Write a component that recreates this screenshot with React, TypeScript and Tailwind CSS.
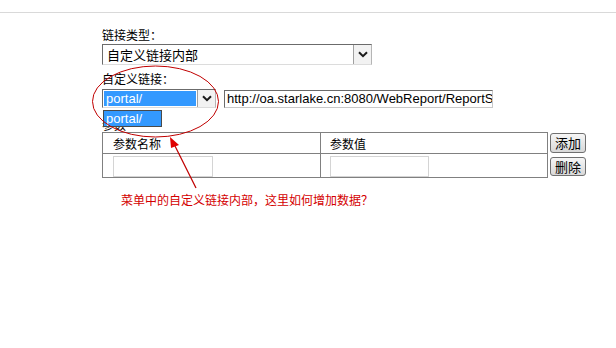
import React from "react";

const cjk = { fontFamily: '"Noto Sans CJK SC", "Noto Sans", sans-serif' };
const latin = { fontFamily: '"Liberation Sans", Arial, "Noto Sans CJK SC", sans-serif' };

function Chevron() {
  return (
    <svg width="10" height="7" viewBox="0 0 10 7">
      <path d="M1 1.2 L5 5.2 L9 1.2" fill="none" stroke="#1a1a1a" strokeWidth="2" />
    </svg>
  );
}

function DropBtn() {
  return (
    <div className="w-[18px] self-stretch flex items-center justify-center bg-[#f2f2f2] border-l border-[#a0a0a0]">
      <Chevron />
    </div>
  );
}

export default function App() {
  return (
    <div className="relative w-[616px] h-[348px] bg-white overflow-hidden text-black" style={cjk}>
      <div className="h-[12px]" />
      <div className="h-px bg-[#d9d9d9]" />

      <div className="pl-[102px] pt-[15px] flex flex-col">
        <div className="text-[12px] leading-[14px] h-[15px]">链接类型：</div>
        <div className="w-[270px] h-[21px] flex border border-t-[#6b6b6b] border-l-[#6b6b6b] border-r-[#b5b5b5] border-b-[#dcdcdc] mt-[1px]">
          <div className="flex-1 pl-[4px] text-[13px] leading-[19px]">自定义链接内部</div>
          <DropBtn />
        </div>

        <div className="text-[12px] leading-[14px] h-[14px] mt-[7px]">自定义链接：</div>
        <div className="flex items-start mt-[3px] h-[20px]">
          <div className="w-[114px] h-[19px] flex border border-t-[#6b6b6b] border-l-[#6b6b6b] border-r-[#b5b5b5] border-b-[#dcdcdc]">
            <div className="flex-1 p-[1px]">
              <div className="h-full bg-[#3399ff] text-white text-[13px] leading-[15px] pl-[2px]" style={latin}>portal/</div>
            </div>
            <DropBtn />
          </div>
          <div
            className="ml-[8px] mt-[1px] w-[269px] h-[18px] border border-t-[#6b6b6b] border-l-[#6b6b6b] border-r-[#c8c8c8] border-b-[#c8c8c8] text-[13px] leading-[16px] pl-[2px] whitespace-nowrap overflow-hidden"
            style={latin}
          >
            http://oa.starlake.cn:8080/WebReport/ReportS
          </div>
        </div>

        <div className="text-[12px] leading-[14px] h-[14px] mt-[9px]">参数</div>

        <div className="flex w-[486px]">
          <div className="flex flex-col w-[446px] border border-[#808080]">
            <div className="flex h-[21px] border-b border-[#808080]">
              <div className="w-[218px] pl-[10px] text-[12px] leading-[21px] border-r border-[#808080]">参数名称</div>
              <div className="flex-1 pl-[9px] text-[12px] leading-[21px]">参数值</div>
            </div>
            <div className="flex h-[23px]">
              <div className="w-[218px] pl-[10px] pt-[2px] border-r border-[#808080]">
                <div className="w-[100px] h-[21px] border border-[#d4d4d4]" />
              </div>
              <div className="flex-1 pl-[9px] pt-[2px]">
                <div className="w-[99px] h-[21px] border border-[#d4d4d4]" />
              </div>
            </div>
          </div>
          <div className="flex flex-col gap-[4px] pl-[2px] pt-[1px]">
            <button className="w-[36px] h-[20px] rounded-[3px] border border-[#707070] bg-gradient-to-b from-[#f6f6f6] to-[#d8d8d8] text-[13px] leading-[18px] text-black">添加</button>
            <button className="w-[36px] h-[19px] rounded-[3px] border border-[#707070] bg-gradient-to-b from-[#f6f6f6] to-[#d8d8d8] text-[13px] leading-[17px] text-black">删除</button>
          </div>
        </div>

        <div className="ml-[19px] mt-[15px] text-[12px] leading-[14px] text-[#d40000]">
          菜单中的自定义链接内部，这里如何增加数据？
        </div>
      </div>

      {/* open dropdown list */}
      <div className="absolute left-[103px] top-[110px] w-[59px] h-[17px] bg-[#3399ff] border border-[#4a4a4a] text-white text-[13px] leading-[15px] pl-[2px]" style={latin}>
        portal/
      </div>

      {/* annotations */}
      <svg className="absolute left-0 top-0 pointer-events-none" width="616" height="348">
        <ellipse cx="155.5" cy="101.5" rx="63" ry="35.5" fill="none" stroke="#c00000" strokeWidth="1" />
        <line x1="196" y1="188" x2="175" y2="146" stroke="#c00000" strokeWidth="1.2" />
        <polygon points="170,137 179,145 171,148" fill="#e00000" />
      </svg>
    </div>
  );
}
